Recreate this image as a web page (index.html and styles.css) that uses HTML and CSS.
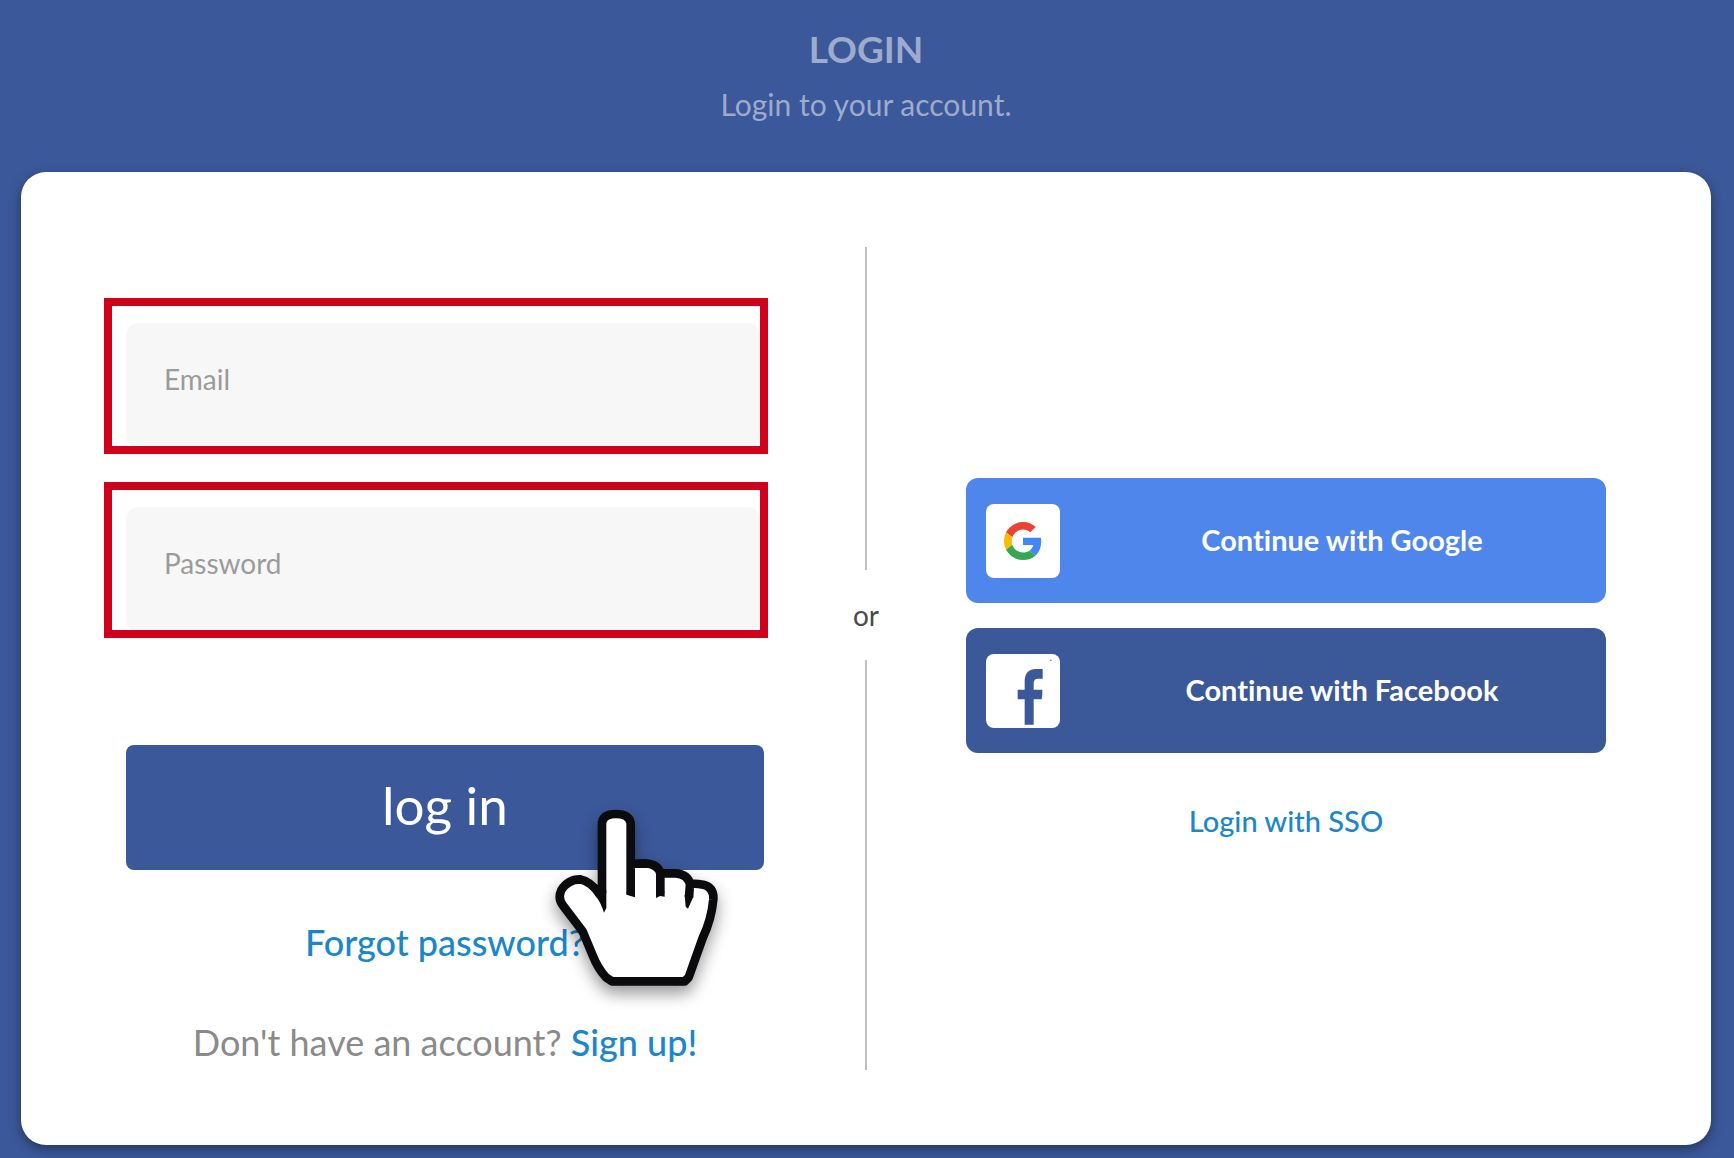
FILE: index.html
```html
<!DOCTYPE html>
<html lang="en">
<head>
    <meta charset="UTF-8">
    <meta name="viewport" content="width=device-width, initial-scale=1.0">
    <title>Login</title>
    <link rel="stylesheet" href="styles.css">
</head>
<body>
    <header>
        <h1>LOGIN</h1>
        <p>Login to your account.</p>
    </header>
    <main class="card">
        <form class="login-form">
            <div class="field">
                <input type="email" name="email" placeholder="Email" aria-label="Email">
            </div>
            <div class="field">
                <input type="password" name="password" placeholder="Password" aria-label="Password">
            </div>
            <div class="submit">
                <button type="button" class="login-button">log in</button>
                <svg class="pointer" viewBox="0 0 660 720" aria-hidden="true">
                    <path d="M216 385V118Q220 102 258 102Q296 102 302 124V252Q310 250 346 250Q384 252 394 280Q404 280 438 280Q474 284 486 312Q496 310 520 314Q552 322 550 358Q544 420 518 474L476 592L464 604H246L228 592Q204 566 188 526L158 454L100 378Q82 356 94 330Q114 298 150 298Q182 304 204 334Z" fill="#fff"/>
                    <path d="M216 340V128Q220 102 258 102Q296 102 302 128V338M302 252Q310 250 346 250Q384 252 391 280V338M394 280Q404 280 438 280Q474 284 480 312L477 352M484 312Q496 310 520 314Q552 322 550 358Q544 420 518 474L476 592L464 604H246L228 592Q204 566 188 526L158 454L100 378Q82 356 94 330Q114 298 150 298Q182 304 210 344" fill="none" stroke="#0b0b0d" stroke-width="26" stroke-linejoin="round"/>
                    <path d="M195 325L229 330V384L222 398Q212 366 195 346ZM289 335H315V352L302 348L289 344ZM378 335H404V350L390 348L378 354ZM464 345L490 350L474 386L467 380Z" fill="#0b0b0d"/>
                </svg>
            </div>
            <a href="#" class="forgot">Forgot password?</a>
            <p class="signup">Don't have an account? <a href="#">Sign up!</a></p>
        </form>
        <div class="divider">
            <span class="line line-top"></span>
            <span class="or">or</span>
            <span class="line line-bottom"></span>
        </div>
        <div class="social">
            <button type="button" class="social-button google">
                <span class="icon">
                    <svg width="38" height="38" viewBox="0 0 48 48" aria-hidden="true">
                        <path fill="#EA4335" d="M24 9.5c3.54 0 6.71 1.22 9.21 3.6l6.85-6.85C35.9 2.38 30.47 0 24 0 14.62 0 6.51 5.38 2.56 13.22l7.98 6.19C12.43 13.72 17.74 9.5 24 9.5z"/>
                        <path fill="#4285F4" d="M46.98 24.55c0-1.57-.15-3.09-.38-4.55H24v9.02h12.94c-.58 2.96-2.26 5.48-4.78 7.18l7.73 6c4.51-4.18 7.09-10.36 7.09-17.65z"/>
                        <path fill="#FBBC05" d="M10.53 28.59c-.48-1.45-.76-2.99-.76-4.59s.27-3.14.76-4.59l-7.98-6.19C.92 16.46 0 20.12 0 24c0 3.88.92 7.54 2.56 10.78l7.97-6.19z"/>
                        <path fill="#34A853" d="M24 48c6.48 0 11.93-2.13 15.89-5.81l-7.73-6c-2.15 1.45-4.92 2.3-8.16 2.3-6.26 0-11.57-4.22-13.47-9.91l-7.98 6.19C6.51 42.62 14.62 48 24 48z"/>
                    </svg>
                </span>
                <span class="text">Continue with Google</span>
            </button>
            <button type="button" class="social-button facebook">
                <span class="icon">
                    <svg width="74" height="74" viewBox="0 0 222 222" aria-hidden="true">
                        <path fill="#3b589a" d="M116 212V136H95V107H116V82C116 57 129 45 150 45H170V74H156C147 74 143 79 143 88V107H169V120L167 136H143V212Z"/>
                        <path fill="#3b589a" d="M191 17h6l-2 5z"/>
                    </svg>
                </span>
                <span class="text">Continue with Facebook</span>
            </button>
            <a href="#" class="sso">Login with SSO</a>
        </div>
    </main>
</body>
</html>
```
FILE: styles.css
```css
* {
    box-sizing: border-box;
}
body {
    font-family: Lato, "Open Sans", sans-serif;
    font-size: 28px;
    font-variant-ligatures: none;
    background-color: #3b589a;
    margin: 0;
    padding: 0 23px 13px 21px;
}
header {
    color: #9dabcd;
    text-align: center;
    padding: 24px 0 38px;
}
h1 {
    margin: 0;
    font-size: 37px;
    font-weight: bold;
    line-height: 50px;
}
header p {
    margin: 0;
    font-size: 30px;
    line-height: 60px;
}
a {
    color: #1a87cb;
    text-decoration: none;
}
button {
    border: none;
    color: white;
    font-family: inherit;
    font-variant-ligatures: none;
    cursor: pointer;
}
.card {
    display: grid;
    grid-template-columns: 1fr 200px 1fr;
    padding: 75px 105px;
    background: white;
    border-radius: 25px;
    box-shadow: 0 4px 12px rgba(0, 0, 0, 0.4);
}
.login-form {
    display: flex;
    flex-direction: column;
    padding: 51px 2px 0 0;
}
.field {
    height: 156px;
    margin: 0 -4px 28px -22px;
    padding: 17px 0 0 14px;
    border: 8px solid #d0021b;
    overflow: hidden;
}
.field input {
    width: 100%;
    height: 125px;
    padding: 0 38px 14px;
    border: none;
    border-radius: 12px;
    background: #f7f7f7;
    font-family: inherit;
    font-size: 28px;
}
.field input::placeholder {
    color: #9b9b9b;
}
.submit {
    position: relative;
    margin-top: 79px;
}
.login-button {
    display: block;
    width: 100%;
    height: 125px;
    padding: 0 0 7px;
    border-radius: 8px;
    background: #3b589a;
    font-size: 53px;
}
/* hand pointer over the corner of the button */
.pointer {
    position: absolute;
    top: 35px;
    right: 14px;
    width: 220px;
    height: 240px;
    pointer-events: none;
    filter: drop-shadow(0 8px 8px rgba(0, 0, 0, 0.4));
}
.forgot,
.signup {
    margin: 46px 0 0;
    text-align: center;
    font-size: 36px;
    line-height: 52px;
}
.forgot {
    font-weight: 500;
}
.signup {
    margin: 48px 0 2px;
    color: #8a8a8a;
}
.signup a {
    font-weight: 500;
}
.divider {
    display: flex;
    flex-direction: column;
    align-items: center;
}
.line {
    width: 2px;
    background: #bfbfbf;
}
.line-top {
    flex: 11;
}
.line-bottom {
    flex: 14;
}
.or {
    color: #4a4a4a;
    line-height: 90px;
}
.social {
    display: flex;
    flex-direction: column;
    justify-content: center;
}
.social-button {
    display: flex;
    align-items: center;
    gap: 18px;
    height: 125px;
    margin-bottom: 25px;
    padding: 0 0 0 20px;
    border-radius: 12px;
    font-size: 29px;
    font-weight: bold;
}
.google {
    background: #4f86ec;
}
.facebook {
    background: #3b5998;
}
.icon {
    display: flex;
    align-items: center;
    justify-content: center;
    width: 74px;
    height: 74px;
    border-radius: 8px;
    background: white;
}
.text {
    flex: 1;
    padding-bottom: 3px;
}
.sso {
    margin-top: 25px;
    text-align: center;
    font-size: 29px;
    font-weight: 500;
    line-height: 36px;
}
```
